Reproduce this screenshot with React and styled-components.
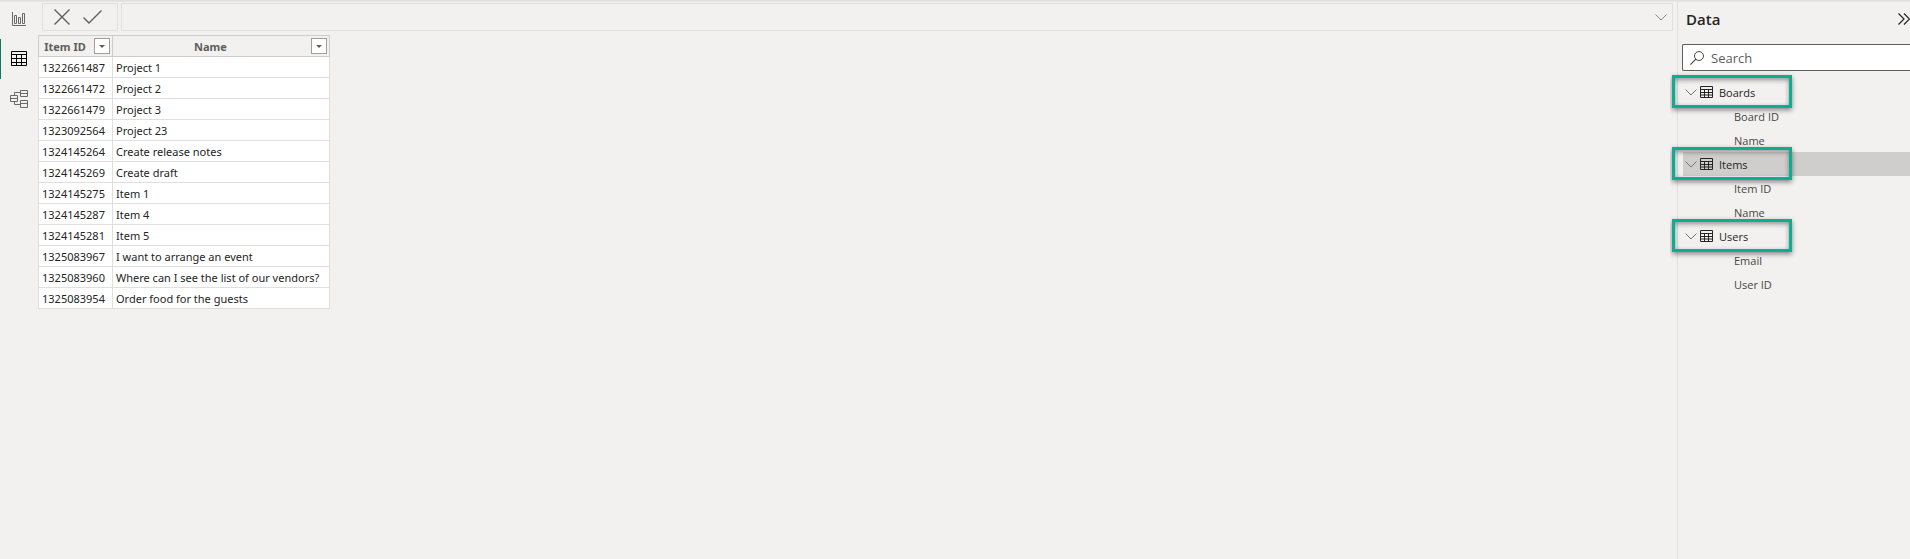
import { useState } from "react";
import styled, { createGlobalStyle } from "styled-components";

const GlobalStyle = createGlobalStyle`
  * { box-sizing: border-box; }
  body {
    margin: 0;
    background: #f2f1ef;
    color: #252423;
    font-family: "Open Sans", "Noto Sans", sans-serif;
    font-size: 11px;
  }
  button, input { font: inherit; color: inherit; }
  button { padding: 0; border: 0; background: none; }
`;

const Wrap = styled.div`
  display: flex;
  min-height: 100vh;
  box-shadow: inset 0 1px #e1dfdd, inset 0 2px #e8e6e4;
`;

const Rail = styled.nav`
  display: flex;
  flex-direction: column;
  flex: none;
  width: 38px;
  margin-top: -1px;
`;

const RailButton = styled.button`
  display: flex;
  align-items: center;
  justify-content: center;
  height: 40px;
  color: ${({ $active }) => ($active ? "#000" : "#6b6967")};
  box-shadow: ${({ $active }) => ($active ? "inset 1px 0 #117865" : "none")};
`;

const Main = styled.main`
  flex: 1;
  min-width: 0;
`;

const FormulaBar = styled.div`
  display: flex;
  gap: 3px;
  height: 28px;
  margin: 3px 4px 4px;
`;

const FormulaActions = styled.div`
  display: flex;
  align-items: center;
  gap: 13px;
  width: 76px;
  padding-left: 11px;
  border: 1px solid #e1dfdd;
  color: #605e5c;

  button { display: flex; }
`;

const FormulaField = styled.div`
  display: flex;
  align-items: center;
  flex: 1;
  padding-right: 5px;
  border: 1px solid #e1dfdd;
  color: #8a8886;

  input {
    flex: 1;
    height: 100%;
    border: 0;
    outline: 0;
    background: none;
  }
  button { display: flex; }
`;

const Table = styled.table`
  width: 292px;
  table-layout: fixed;
  border-collapse: collapse;
  background: #fff;
  font-family: "Noto Sans", "Open Sans", sans-serif;
`;

const Th = styled.th`
  width: ${({ $width }) => $width || "auto"};
  height: 21px;
  padding: 0 2px 0 3px;
  border: 1px solid #cfcdcb;
  background: #f2f1ef;
  color: #605e5c;
`;

const ThInner = styled.div`
  display: flex;
  align-items: center;
  height: 20px;

  span {
    flex: 1;
    padding-right: 6px;
  }
`;

const FilterButton = styled.button`
  display: flex;
  align-items: center;
  justify-content: center;
  width: 16px;
  height: 16px;
  border: 1px solid #a19f9d;
  background: #fff;
  color: #605e5c;
`;

const Td = styled.td`
  height: 21px;
  padding: 2px 3px 0;
  border: 1px solid #e1dfdd;
  line-height: 18px;
  white-space: nowrap;
`;

const Pane = styled.aside`
  flex: none;
  width: 233px;
  border-left: 1px solid #e1dfdd;
  overflow: clip;
  overflow-clip-margin: 8px;
`;

const PaneHeader = styled.header`
  display: flex;
  align-items: center;
  justify-content: space-between;
  height: 37px;
  padding-left: 8px;

  h2 {
    margin: 0;
    font-size: 15px;
    font-weight: 600;
  }
  button { display: flex; }
`;

const SearchBox = styled.label`
  display: flex;
  align-items: center;
  gap: 7px;
  height: 27px;
  margin: 7px 0 9px 4px;
  padding-left: 7px;
  border: 1px solid #605e5c;
  border-right: 0;
  border-radius: 2px 0 0 2px;
  background: #fff;
  color: #484644;

  input {
    flex: 1;
    min-width: 0;
    padding: 0;
    border: 0;
    outline: 0;
    background: none;
    font-size: 13px;
  }
  input::placeholder { color: #605e5c; }
`;

const Tree = styled.ul`
  margin: 0 0 0 5px;
  padding: 0;
  list-style: none;
`;

const Fields = styled.ul`
  margin: 0;
  padding: 0;
  list-style: none;
`;

const Field = styled.li`
  height: 24px;
  padding-left: 51px;
  line-height: 26px;
  color: #484644;
`;

const TableRow = styled.button`
  position: relative;
  display: flex;
  align-items: center;
  width: 100%;
  height: 24px;
  padding-left: 2px;
  background: ${({ $selected }) => ($selected ? "#d0cecc" : "none")};
  text-align: left;

  svg:first-child { margin-right: 3px; color: #797775; }
  span { margin-left: 6px; }
`;

// green marker drawn over the table name
const Highlight = styled.i`
  position: absolute;
  top: -5px;
  bottom: -4px;
  left: -11px;
  width: 120px;
  border: 3px solid #0aae92;
  box-shadow: 0 2px 5px rgba(0, 0, 0, 0.45), inset 0 2px 5px rgba(0, 0, 0, 0.4);
  pointer-events: none;
`;

const Svg = ({ w, h, children }) => (
  <svg width={w} height={h} viewBox={`0 0 ${w} ${h}`} fill="none" stroke="currentColor" aria-hidden="true">
    {children}
  </svg>
);

const ReportIcon = () => (
  <Svg w={14} h={14}>
    <path d="M.5 0v13.5H14M2.5 3.5h2v8h-2zM6.5 5.5h2v6h-2zM10.5 1.5h2v10h-2z" />
  </Svg>
);

const GridIcon = () => (
  <Svg w={16} h={16}>
    <path d="M.5.5h15v14H.5zM0 3.5h16M0 7.5h16M0 11.5h16M5.5 3v12M10.5 3v12" />
  </Svg>
);

const ModelIcon = () => (
  <Svg w={18} h={18}>
    <path d="M.5 5.5h7v6h-7zM.5 8.5h7M10.5.5h7v6h-7zM10.5 3.5h7M10.5 10.5h7v7h-7zM10.5 13.5h7M4.5 5.5v-3h6M4.5 11.5v3h6" />
  </Svg>
);

const CrossIcon = () => (
  <Svg w={16} h={16}>
    <path d="M.5.5l15 15M15.5.5l-15 15" strokeWidth="1.4" />
  </Svg>
);

const CheckIcon = () => (
  <Svg w={19} h={14}>
    <path d="M.5 7.5l5.5 5.5L18.5.5" strokeWidth="1.4" />
  </Svg>
);

const ChevronIcon = () => (
  <Svg w={12} h={7}>
    <path d="M.5.5L6 6l5.5-5.5" />
  </Svg>
);

const CollapseIcon = () => (
  <Svg w={12} h={12}>
    <path d="M.5.5L6 6 .5 11.5M6 .5L11.5 6 6 11.5" strokeWidth="1.2" />
  </Svg>
);

const SearchIcon = () => (
  <Svg w={14} h={14}>
    <circle cx="9" cy="5" r="4.5" />
    <path d="M5.8 8.2L.4 13.6" strokeWidth="1.2" />
  </Svg>
);

const TableIcon = () => (
  <Svg w={13} h={12}>
    <path d="M.5.5h12v11H.5zM0 3.5h13M0 6.5h13M0 9h13M4.5 3v9M8.5 3v9" />
  </Svg>
);

const CaretIcon = () => (
  <Svg w={6} h={3}>
    <path d="M0 0h6L3 3z" fill="currentColor" stroke="none" />
  </Svg>
);

const views = [
  { name: "Report view", Icon: ReportIcon },
  { name: "Table view", Icon: GridIcon },
  { name: "Model view", Icon: ModelIcon },
];

const rows = [
  ["1322661487", "Project 1"],
  ["1322661472", "Project 2"],
  ["1322661479", "Project 3"],
  ["1323092564", "Project 23"],
  ["1324145264", "Create release notes"],
  ["1324145269", "Create draft"],
  ["1324145275", "Item 1"],
  ["1324145287", "Item 4"],
  ["1324145281", "Item 5"],
  ["1325083967", "I want to arrange an event"],
  ["1325083960", "Where can I see the list of our vendors?"],
  ["1325083954", "Order food for the guests"],
];

const tables = [
  { name: "Boards", fields: ["Board ID", "Name"] },
  { name: "Items", fields: ["Item ID", "Name"] },
  { name: "Users", fields: ["Email", "User ID"] },
];

const HeaderCell = ({ label, width }) => (
  <Th $width={width}>
    <ThInner>
      <span>{label}</span>
      <FilterButton aria-label={`Filter ${label}`}>
        <CaretIcon />
      </FilterButton>
    </ThInner>
  </Th>
);

export default function App() {
  const [view, setView] = useState("Table view");
  const [selected, setSelected] = useState("Items");

  return (
    <Wrap>
      <GlobalStyle />
      <Rail>
        {views.map(({ name, Icon }) => (
          <RailButton key={name} aria-label={name} $active={view === name} onClick={() => setView(name)}>
            <Icon />
          </RailButton>
        ))}
      </Rail>

      <Main>
        <FormulaBar>
          <FormulaActions>
            <button aria-label="Cancel"><CrossIcon /></button>
            <button aria-label="Commit"><CheckIcon /></button>
          </FormulaActions>
          <FormulaField>
            <input type="text" aria-label="Formula" />
            <button aria-label="Expand formula bar"><ChevronIcon /></button>
          </FormulaField>
        </FormulaBar>
        <Table>
          <thead>
            <tr>
              <HeaderCell label="Item ID" width="74px" />
              <HeaderCell label="Name" />
            </tr>
          </thead>
          <tbody>
            {rows.map(([id, name]) => (
              <tr key={id}>
                <Td>{id}</Td>
                <Td>{name}</Td>
              </tr>
            ))}
          </tbody>
        </Table>
      </Main>

      <Pane>
        <PaneHeader>
          <h2>Data</h2>
          <button aria-label="Collapse pane"><CollapseIcon /></button>
        </PaneHeader>
        <SearchBox>
          <SearchIcon />
          <input type="text" placeholder="Search" aria-label="Search" />
        </SearchBox>
        <Tree>
          {tables.map(({ name, fields }) => (
            <li key={name}>
              <TableRow $selected={selected === name} onClick={() => setSelected(name)}>
                <ChevronIcon />
                <TableIcon />
                <span>{name}</span>
                <Highlight />
              </TableRow>
              <Fields>
                {fields.map((field) => (
                  <Field key={field}>{field}</Field>
                ))}
              </Fields>
            </li>
          ))}
        </Tree>
      </Pane>
    </Wrap>
  );
}
